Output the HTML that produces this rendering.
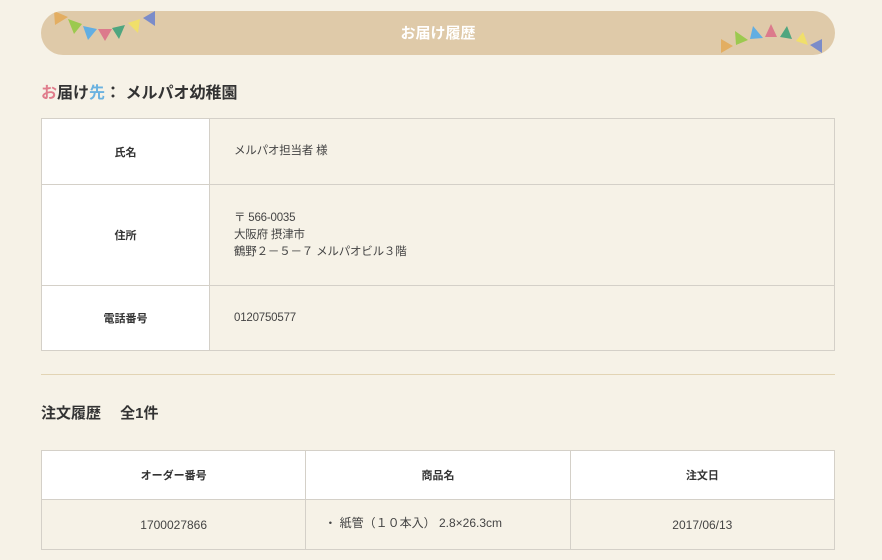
<!DOCTYPE html>
<html><head><meta charset="utf-8">
<style>
*{margin:0;padding:0;box-sizing:border-box}
body{width:882px;height:560px;overflow:hidden;background:#f6f2e7;font-family:"Liberation Sans","Noto Sans CJK JP",sans-serif;color:#333;position:relative}
.banner{position:absolute;left:41px;top:11px;width:794px;height:44px;background:#dfcaa9;border-radius:22px;overflow:hidden}
.banner .t{position:absolute;left:0;right:0;top:11px;text-align:center;color:#fff;font-weight:bold;font-size:15px}
h2{position:absolute;left:41px;top:79px;font-size:16px;font-weight:bold;color:#333}
table{position:absolute;border-collapse:collapse;font-size:12px}
td,th{border:1px solid #d4d0c8}
#t1{left:41px;top:118px;width:794px}
#t1 th{width:168px;background:#fff;font-weight:bold;font-size:11px}
#t1 td{padding-left:24px;line-height:17px;color:#444;font-size:11.5px;letter-spacing:-0.2px}
.sep{position:absolute;left:41px;top:374px;width:794px;height:1px;background:#e2d4b4}
h3{position:absolute;left:41px;top:402px;font-size:15px;font-weight:bold}
#t2{left:41px;top:450px;width:794px}
#t2 th{height:49px;background:#fff;font-size:11px;font-weight:bold;width:33.3%}
#t2 td{height:50px;text-align:center;color:#444}
</style></head><body>
<div class="banner">
<svg width="794" height="44" style="position:absolute;left:0;top:0">
<polygon points="13,0 27,6 14,14" fill="#e3ae62"/>
<polygon points="27,8 41,13 33,23" fill="#9cc94f"/>
<polygon points="42,15 56,18 47,29" fill="#62aee2"/>
<polygon points="57,18 71,18 64,30" fill="#dc7a8c"/>
<polygon points="71,17 84,14 78,28" fill="#4fa67f"/>
<polygon points="87,12 99,8 97,22" fill="#f0df6a"/>
<polygon points="102,7 114,0 114,15" fill="#7b8cc9"/>
<polygon points="680,28 692,35 680,42" fill="#e3ae62"/>
<polygon points="694,20 707,29 695,34" fill="#9cc94f"/>
<polygon points="712,15 722,27 709,28" fill="#62aee2"/>
<polygon points="730,13 736,26 724,26" fill="#dc7a8c"/>
<polygon points="746,15 751,28 739,26" fill="#4fa67f"/>
<polygon points="762,21 767,34 755,30" fill="#f0df6a"/>
<polygon points="781,28 781,42 769,34" fill="#7b8cc9"/>
</svg>
<div class="t">お届け履歴</div>
</div>
<h2><span style="color:#e07d8c">お</span>届け<span style="color:#6ab2e0">先</span>： メルパオ幼稚園</h2>
<table id="t1">
<tr style="height:66px"><th>氏名</th><td>メルパオ担当者 様</td></tr>
<tr style="height:101px"><th>住所</th><td>〒 566-0035<br>大阪府 摂津市<br>鶴野２－５－７ メルパオビル３階</td></tr>
<tr style="height:65px"><th>電話番号</th><td>0120750577</td></tr>
</table>
<div class="sep"></div>
<h3>注文履歴　 全1件</h3>
<table id="t2">
<tr><th>オーダー番号</th><th>商品名</th><th>注文日</th></tr>
<tr><td>1700027866</td><td style="text-align:left;padding-left:18px;padding-bottom:4px">・ 紙管（１０本入） 2.8×26.3cm</td><td>2017/06/13</td></tr>
</table>
</body></html>
